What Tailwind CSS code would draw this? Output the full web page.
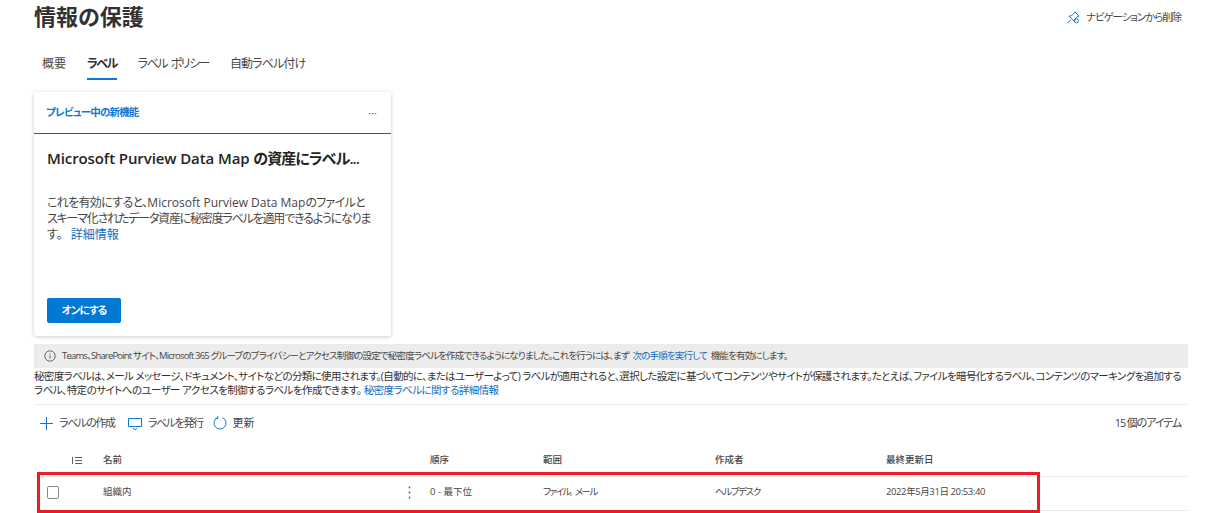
<!DOCTYPE html>
<html lang="ja">
<head>
    <meta charset="UTF-8">
    <title>情報の保護</title>
    <script src="https://cdn.jsdelivr.net/npm/@tailwindcss/browser@4"></script>
</head>
<body class="bg-white overflow-hidden font-['Open_Sans','Noto_Sans_CJK_JP',sans-serif] [font-feature-settings:'palt'] text-[#323130]">
    <div class="w-[1213px] h-[513px] overflow-hidden pl-[34px] pr-[25px]">
        <!-- title -->
        <div class="h-[36px] flex justify-between items-start">
            <h1 class="text-[22px] leading-[32px] font-semibold text-[#323130]">情報の保護</h1>
            <div class="flex items-center gap-[5px] mt-[10px] text-[10.500px] tracking-[-1.1px] pr-[7px] text-[#484644] whitespace-nowrap">
                <svg width="15" height="15" viewBox="0 0 16 16" fill="none" stroke="#0f6cbd" stroke-width="1"><path d="M9.500 2l4.500 4.500-2 .8-2.500 2.600-.3 2.600-6-6 2.600-.3L8.300 3.700z"/><path d="M5 10.500l-3.500 3.500"/><circle cx="11" cy="11.500" r="2.200"/></svg>
                <span>ナビゲーションから削除</span>
            </div>
        </div>
        <!-- tabs -->
        <div class="flex mt-[12px] h-[32px] text-[12px] text-[#484644] pl-[8px] gap-[21px]">
            <div class="pt-[7px]">概要</div>
            <div class="pt-[7px] font-semibold text-[#323130] border-b-2 border-[#0f78d4] tracking-[-1.600px] whitespace-nowrap">ラベル</div>
            <div class="pt-[7px] tracking-[-1.500px] [word-spacing:2px]">ラベル ポリシー</div>
            <div class="pt-[7px] tracking-[-0.900px]">自動ラベル付け</div>
        </div>
        <!-- card -->
        <div class="mt-[12px] w-[357px] h-[244px] rounded-[3px] shadow-[0_1px_4px_rgba(0,0,0,0.2)] flex flex-col">
            <div class="h-[42px] flex items-center justify-between px-[12px] border-b border-[#4a5560]">
                <span class="text-[10.500px] font-semibold tracking-[-0.800px] text-[#0f78d4]">プレビュー中の新機能</span>
                <span class="text-[11px] text-[#605e5c] pr-[2px] leading-none">···</span>
            </div>
            <div class="px-[13px] flex flex-col flex-1">
                <h2 class="mt-[13px] text-[15px] leading-[22px] font-semibold tracking-[-0.1px] text-[#252423] whitespace-nowrap">Microsoft Purview Data Map <span class="tracking-[-0.900px]">の資産にラベル...</span></h2>
                <p class="mt-[26px] text-[12px] leading-[16px] text-[#484644] whitespace-nowrap">
                    <span class="tracking-[-0.650px]">これを有効にすると、</span>Microsoft Purview Data Map<span class="tracking-[-0.650px]">のファイルと</span><br>
                    <span class="tracking-[-1.200px]">スキーマ化されたデータ資産に秘密度ラベルを適用できるようになりま</span><br>
                    <span class="mr-[8px]">す。</span><a class="text-[#0f6cbd]">詳細情報</a>
                </p>
                <button class="mt-[55px] w-[74px] h-[25px] rounded-[2px] bg-[#0078d4] text-white text-[10.500px] font-semibold tracking-[-0.800px]">オンにする</button>
            </div>
        </div>
        <!-- notice -->
        <div class="mt-[8px] h-[24px] bg-[#ececec] flex items-center pl-[10px] gap-[6px] text-[9.500px] tracking-[-0.820px] text-[#484644] whitespace-nowrap">
            <svg width="12" height="12" viewBox="0 0 12 12" fill="none" stroke="#484644" stroke-width=".8"><circle cx="6" cy="6" r="5.200"/><path d="M6 5.200v3.400M6 3.200v1"/></svg>
            <span>Teams、SharePoint サイト、Microsoft 365 グループのプライバシーとアクセス制御の設定で秘密度ラベルを作成できるようになりました。これを行うには、まず <a class="text-[#0f6cbd] mx-[2px]">次の手順を実行して</a> 機能を有効にします。</span>
        </div>
        <!-- description -->
        <p class="mt-[1px] pb-[7px] border-b border-[#edebe9] text-[10.500px] leading-[14px] tracking-[-0.550px] text-[#323130] whitespace-nowrap"><span class="tracking-[-0.640px]">秘密度ラベルは、メール メッセージ、ドキュメント、サイトなどの分類に使用されます。(自動的に、またはユーザーよって) ラベルが適用されると、選択した設定に基づいてコンテンツやサイトが保護されます。たとえば、ファイルを暗号化するラベル、コンテンツのマーキングを追加する</span><br>ラベル、特定のサイトへのユーザー アクセスを制御するラベルを作成できます。 <a class="text-[#0f6cbd]">秘密度ラベルに関する詳細情報</a></p>
        <!-- toolbar -->
        <div class="h-[36px] flex items-center justify-between pl-[6px] pr-[7px] text-[11px] text-[#484644]">
            <div class="flex items-center">
                <svg width="13" height="13" viewBox="0 0 13 13" stroke="#0f78d4" stroke-width="1"><path d="M6.500 0v13M0 6.500h13"/></svg>
                <span class="ml-[6px] tracking-[-1.300px]">ラベルの作成</span>
                <svg class="ml-[13px]" width="14" height="13" viewBox="0 0 14 13" fill="none" stroke="#0f78d4" stroke-width="1"><path d="M.5 1.500h13v8h-13z"/><path d="M5 11.500l2 1 2-1" /></svg>
                <span class="ml-[6px] tracking-[-1.400px]">ラベルを発行</span>
                <svg class="ml-[10px]" width="14" height="14" viewBox="0 0 14 14" fill="none" stroke="#0f78d4" stroke-width="1"><path d="M4.500 1.600A6 6 0 1 0 9.500 1.600"/><path d="M4.800 .2v2.400h-2.400"/></svg>
                <span class="ml-[6px]">更新</span>
            </div>
            <span class="tracking-[-1.100px]">15 個のアイテム</span>
        </div>
        <!-- table -->
        <div class="mt-[9px] flex items-center h-[27px] pb-[6px] border-b border-[#edebe9] text-[9.500px] font-medium text-[#484644]">
            <div class="w-[38px] shrink-0"></div>
            <div class="w-[31px] shrink-0">
                <svg width="10" height="9" viewBox="0 0 10 9" stroke="#605e5c" stroke-width="1"><path d="M.5 1v7M3 1.500h7M3 4.500h7M3 7.500h7"/></svg>
            </div>
            <div class="w-[327px] shrink-0">名前</div>
            <div class="w-[113px] shrink-0">順序</div>
            <div class="w-[172px] shrink-0">範囲</div>
            <div class="w-[171px] shrink-0">作成者</div>
            <div>最終更新日</div>
        </div>
        <div class="relative flex items-center h-[34px] pb-[2px] border-b border-[#edebe9] text-[9.500px] text-[#484644]">
            <div class="w-[69px] shrink-0 pl-[13px]">
                <div class="w-[12px] h-[13px] border border-[#8a8886] rounded-[2px]"></div>
            </div>
            <div class="w-[305px] shrink-0">組織内</div>
            <div class="w-[22px] shrink-0">
                <svg width="3" height="13" viewBox="0 0 3 13" fill="#0f6cbd"><circle cx="1.500" cy="1.500" r=".9"/><circle cx="1.500" cy="6.500" r=".9"/><circle cx="1.500" cy="11.500" r=".9"/></svg>
            </div>
            <div class="w-[113px] shrink-0">0 - 最下位</div>
            <div class="w-[172px] shrink-0 tracking-[-1.500px] [word-spacing:3px]">ファイル, メール</div>
            <div class="w-[171px] shrink-0 tracking-[-1.400px]">ヘルプデスク</div>
            <div class="tracking-[-0.400px]">2022年5月31日 20:53:40</div>
            <!-- red highlight over the row -->
            <div class="absolute left-[3px] top-[-5px] w-[1003px] h-[41px] border-[3px] border-[#ed1c24] pointer-events-none"></div>
        </div>
    </div>
</body>
</html>
